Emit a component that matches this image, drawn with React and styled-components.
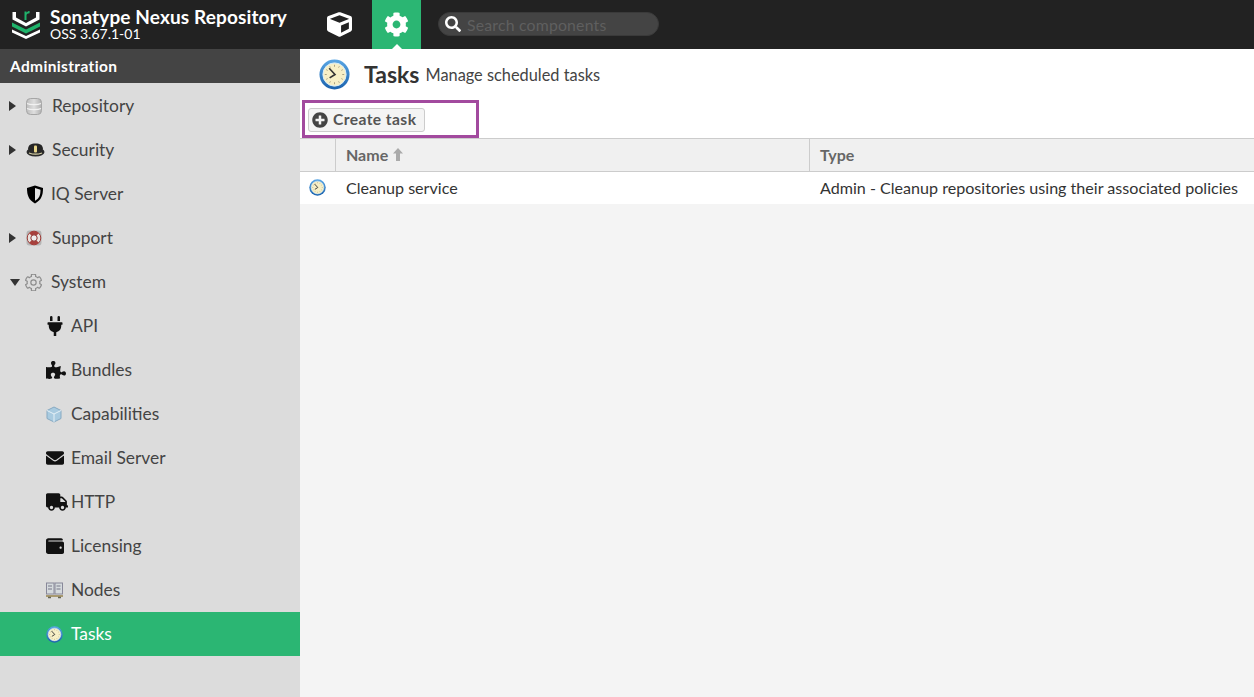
import React from "react";
import styled, { createGlobalStyle } from "styled-components";
import { FaCube, FaCog, FaSearch, FaPlug, FaPuzzlePiece, FaEnvelope, FaTruck, FaWallet, FaPlusCircle } from "react-icons/fa";

const Global = createGlobalStyle`
  html, body { margin: 0; padding: 0; height: 100%; overflow: hidden; }
  #root { height: 100%; }
  * { box-sizing: border-box; }
  body { font-family: "Lato", "Liberation Sans", sans-serif; color: #333; }
`;
const Page = styled.div`display: flex; flex-direction: column; width: 1254px; height: 697px;`;
const Header = styled.header`height: 49px; background: #222; display: flex; align-items: stretch; flex: none;`;
const Brand = styled.div`width: 315px; display: flex; align-items: center; padding-left: 12px; gap: 10px;`;
const BrandText = styled.div`display: flex; flex-direction: column; color: #fff; margin-top: -1px;`;
const BrandName = styled.div`font-size: 19px; font-weight: 700; line-height: 19px; letter-spacing: .13px; white-space: nowrap;`;
const BrandVersion = styled.div`font-size: 14px; line-height: 15px; white-space: nowrap;`;
const Nav = styled.div`display: flex; gap: 8px;`;
const NavButton = styled.div`
  width: 49px; display: flex; align-items: center; justify-content: center; position: relative; color: #fff; font-size: 25px;
  background: ${p => (p.$active ? "#2bb673" : "transparent")};
  ${p => p.$active ? `&::after { content: ""; position: absolute; left: 50%; bottom: 0; margin-left: -5px; border: 5px solid transparent; border-top: 0; border-bottom-color: #fff; }` : ""}
`;
const Search = styled.div`
  margin: 12px 0 0 17px; width: 221px; height: 24px; border-radius: 12px; background: #444; display: flex; align-items: center;
  padding-left: 6px; gap: 6px; color: #fff; font-size: 16px; border: 1px solid #3a3a3a;
`;
const SearchHint = styled.span`color: #5f5f5f; font-size: 15.8px; letter-spacing: .2px; white-space: nowrap;`;
const Body = styled.div`flex: 1; display: flex; min-height: 0;`;
const Sidebar = styled.nav`width: 300px; background: #dcdcdc; flex: none;`;
const SideTitle = styled.div`height: 34px; background: #444; color: #fff; font-size: 15.5px; font-weight: 700; letter-spacing: .35px; display: flex; align-items: center; padding-left: 10px; margin-bottom: 1px;`;
const Row = styled.div`
  height: 44px; display: flex; align-items: center; font-size: 17.4px;
  color: ${p => (p.$active ? "#fff" : "#444")};
  background: ${p => (p.$active ? "#2bb673" : "transparent")};
  padding-left: ${p => (p.$child ? "46px" : "9px")};
`;
const RowLabel = styled.span`margin-top: -1px;`;
const Arrow = styled.span`
  width: 0; height: 0; flex: none;
  ${p => p.$open
    ? "border-left: 5.5px solid transparent; border-right: 5.5px solid transparent; border-top: 7px solid #333; margin-left: 1px; margin-right: 5px;"
    : "border-top: 5.5px solid transparent; border-bottom: 5.5px solid transparent; border-left: 7px solid #333; margin-right: 10px;"}
  ${p => p.$none ? "border-color: transparent;" : ""}
`;
const IconSlot = styled.span`width: ${p => p.$w}px; height: 18px; display: flex; align-items: center; flex: none; font-size: 18px; color: #111;`;
const Main = styled.main`flex: 1; background: #f4f4f4; display: flex; flex-direction: column; min-width: 0;`;
const TitleBar = styled.div`background: #fff; height: 51px; display: flex; align-items: center; padding-left: 19px;`;
const TitleText = styled.h1`font-size: 23px; font-weight: 700; margin: -2px 6px 0 14px; color: #333;`;
const TitleSub = styled.span`font-size: 16.35px; color: #444;`;
const Toolbar = styled.div`background: #fff; height: 38px; padding-left: 2px;`;
const Highlight = styled.div`width: 177px; height: 38px; border: 3px solid #a24a9e; padding: 5px 0 0 3px;`;
const CreateBtn = styled.button`
  width: 117px; height: 24px; padding: 0 0 2px 3px; background: #f4f4f4; border: 1px solid #ccc; border-radius: 3px; display: flex; align-items: center; gap: 5px;
  font: 700 15.6px "Lato", sans-serif; color: #555; letter-spacing: .42px;
`;
const TableHead = styled.div`display: grid; grid-template-columns: 35px 474px 1fr; height: 34px; background: #f0f0f0; border-top: 1px solid #ccc; border-bottom: 1px solid #ccc;`;
const HeadCell = styled.div`
  display: flex; align-items: center; padding: 0 0 2px 10px; gap: 5px; font-size: 16px; font-weight: 700; color: #666;
  border-left: ${p => (p.$sep ? "1px solid #ccc" : "none")};
`;
const TableRow = styled.div`display: grid; grid-template-columns: 36px 474px 1fr; height: 32px; background: #fff; align-items: center;`;
const Cell = styled.div`font-size: 16.1px; color: #333; padding: 0 0 2px ${p => (p.$icon ? "9px" : "10px")}; display: flex; align-items: center; white-space: nowrap;`;

const Logo = () => (
  <svg width="28" height="29" viewBox="0 0 28 29">
    <path d="M.5 2h3.500v5.500L14 13l10-5.500V2h3.500v7.500L14 16.500.5 9.500z" fill="#fff" />
    <path d="M0 12.500 14 19.500l14-7v4L14 23.500 0 16.500z" fill="#1fb36b" />
    <path d="M0 19.500l14 6.500 14-6.500V22.500L14 29 0 22.500z" fill="#fff" />
    <path d="M12.500 10V1.500h2v1.300C15.300 1.600 16.300 1 17.600 1v2.200c-1.900 0-3.100.8-3.100 2.300V10z" fill="#1fb36b" />
  </svg>
);
const Clock = ({ size, id }) => (
  <svg width={size} height={size} viewBox="0 0 32 32">
    <defs>
      <linearGradient id={id} x1="0" y1="0" x2="0" y2="1">
        <stop offset="0" stopColor="#5aa6e4" />
        <stop offset="1" stopColor="#1b62ad" />
      </linearGradient>
    </defs>
    <circle cx="16" cy="16" r="15.500" fill={`url(#${id})`} />
    <circle cx="16" cy="16" r="12" fill="#f7efc6" stroke="#d8ecf8" strokeWidth="1" />
    <path d="M16 6v2M16 24v2M6 16h2M24 16h2M11 7.500l.8 1.400M21 7.500l-.8 1.400M7.500 11l1.400.8M7.500 21l1.400-.8M24.500 11l-1.400.8M24.500 21l-1.400-.8M11 24.500l.8-1.400M21 24.500l-.8-1.400" stroke="#a89f80" strokeWidth="1" />
    <path d="M10.500 9.500l6 6.500-5.500 3.500" stroke="#333" strokeWidth="1.700" fill="none" />
  </svg>
);
const Db = () => (
  <svg width="16" height="17" viewBox="0 0 16 17">
    <defs>
      <linearGradient id="dbg" x1="0" y1="0" x2="1" y2="0">
        <stop offset="0" stopColor="#bdbdbd" />
        <stop offset=".5" stopColor="#dedede" />
        <stop offset="1" stopColor="#b0b0b0" />
      </linearGradient>
    </defs>
    <rect x=".5" y=".5" width="15" height="16" rx="4" fill="url(#dbg)" stroke="#a6a6a6" />
    <path d="M1 5.500c3 1.600 11 1.600 14 0M1 10.500c3 1.600 11 1.600 14 0" stroke="#f2f2f2" strokeWidth="1.300" fill="none" />
  </svg>
);
const Cap = () => (
  <svg width="19" height="14" viewBox="0 0 19 14">
    <ellipse cx="9.500" cy="9" rx="9" ry="4.500" fill="#2a2a2a" />
    <path d="M2 6.500C2 2 5 .5 9.500.5S17 2 17 6.500c-4 1.500-11 1.500-15 0z" fill="#262626" />
    <rect x="8" y="2.500" width="3" height="7" rx="1" fill="#e8d68a" />
    <path d="M3 10c4 1.500 9 1.500 13 0" stroke="#d9d3a8" strokeWidth="1.200" fill="none" />
  </svg>
);
const Shield = () => (
  <svg width="18" height="19" viewBox="0 0 18 19">
    <path d="M9 .5 17 3c0 7-1.500 12-8 15.500C2.500 15 1 10 1 3z" fill="#000" />
    <path d="M9 3l5.500 1.700c0 5-1 8.500-5.500 11z" fill="#e4e4e4" />
  </svg>
);
const Buoy = () => (
  <svg width="16" height="16" viewBox="0 0 16 16">
    <rect x=".5" y=".5" width="15" height="15" rx="3" fill="#b5b5b5" />
    <circle cx="8" cy="8" r="6.800" fill="#e8e2de" stroke="#9c3a36" strokeWidth="1" />
    <path d="M8 8 3.200 3.200A6.800 6.800 0 0 1 12.800 3.200zM8 8 3.200 12.800A6.800 6.800 0 0 0 12.800 12.800z" fill="#a8403c" />
    <circle cx="8" cy="8" r="3.200" fill="#eee" stroke="#8e3330" strokeWidth="1" />
  </svg>
);
const Box = () => (
  <svg width="16" height="17" viewBox="0 0 16 17">
    <path d="M8 1l7 3.500v8L8 16l-7-3.500v-8z" fill="#a9cbe0" stroke="#86a9c2" />
    <path d="M1 4.500 8 8l7-3.500M8 8v8" fill="none" stroke="#e6f1f7" />
  </svg>
);
const Nodes = () => (
  <svg width="17" height="17" viewBox="0 0 17 17">
    <rect x=".5" y="1" width="7.500" height="11" fill="#d5dadd" stroke="#889" />
    <rect x="9" y="1" width="7.500" height="11" fill="#d5dadd" stroke="#889" />
    <path d="M2 4h4M2 7h4M10.500 4h4M10.500 7h4" stroke="#778" />
    <rect x="0" y="13" width="17" height="2" fill="#a89a70" />
    <path d="M2 15.500h3M12 15.500h3" stroke="#665" strokeWidth="1.500" />
  </svg>
);
const SortUp = () => (
  <svg width="10" height="13" viewBox="0 0 10 13">
    <path d="M5 0l5 5.500H7V13H3V5.500H0z" fill="#aaa" />
  </svg>
);

const items = [
  { label: "Repository", arrow: true, icon: <Db />, w: 26 },
  { label: "Security", arrow: true, icon: <Cap />, w: 26 },
  { label: "IQ Server", none: true, icon: <Shield />, w: 25 },
  { label: "Support", arrow: true, icon: <Buoy />, w: 26 },
  { label: "System", open: true, icon: <FaCog style={{ fontSize: 17, color: "#dcdcdc", stroke: "#8c8c8c", strokeWidth: 36 }} />, w: 26 },
  { label: "API", child: true, icon: <FaPlug style={{ fontSize: 20, marginLeft: -1 }} />, w: 25 },
  { label: "Bundles", child: true, icon: <FaPuzzlePiece style={{ fontSize: 20 }} />, w: 25 },
  { label: "Capabilities", child: true, icon: <Box />, w: 25 },
  { label: "Email Server", child: true, icon: <FaEnvelope />, w: 25 },
  { label: "HTTP", child: true, icon: <FaTruck style={{ fontSize: 22 }} />, w: 25 },
  { label: "Licensing", child: true, icon: <FaWallet />, w: 25 },
  { label: "Nodes", child: true, icon: <Nodes />, w: 25 },
  { label: "Tasks", child: true, active: true, icon: <Clock size={17} id="clockSide" />, w: 25 },
];

export default function App() {
  return (
    <Page>
      <Global />
      <Header>
        <Brand>
          <Logo />
          <BrandText>
            <BrandName>Sonatype Nexus Repository</BrandName>
            <BrandVersion>OSS 3.67.1-01</BrandVersion>
          </BrandText>
        </Brand>
        <Nav>
          <NavButton><FaCube /></NavButton>
          <NavButton $active><FaCog /></NavButton>
        </Nav>
        <Search><FaSearch /><SearchHint>Search components</SearchHint></Search>
      </Header>
      <Body>
        <Sidebar>
          <SideTitle>Administration</SideTitle>
          {items.map(it => (
            <Row key={it.label} $child={it.child} $active={it.active}>
              {!it.child && <Arrow $open={it.open} $none={it.none} />}
              <IconSlot $w={it.w}>{it.icon}</IconSlot>
              <RowLabel>{it.label}</RowLabel>
            </Row>
          ))}
        </Sidebar>
        <Main>
          <TitleBar>
            <Clock size={31} id="clockTitle" />
            <TitleText>Tasks</TitleText>
            <TitleSub>Manage scheduled tasks</TitleSub>
          </TitleBar>
          <Toolbar>
            <Highlight>
              <CreateBtn><FaPlusCircle style={{ fontSize: 16, color: "#444", marginTop: 2 }} />Create task</CreateBtn>
            </Highlight>
          </Toolbar>
          <TableHead>
            <HeadCell />
            <HeadCell $sep>Name <SortUp /></HeadCell>
            <HeadCell $sep>Type</HeadCell>
          </TableHead>
          <TableRow>
            <Cell $icon><Clock size={17} id="clockRow" /></Cell>
            <Cell>Cleanup service</Cell>
            <Cell>Admin - Cleanup repositories using their associated policies</Cell>
          </TableRow>
        </Main>
      </Body>
    </Page>
  );
}
